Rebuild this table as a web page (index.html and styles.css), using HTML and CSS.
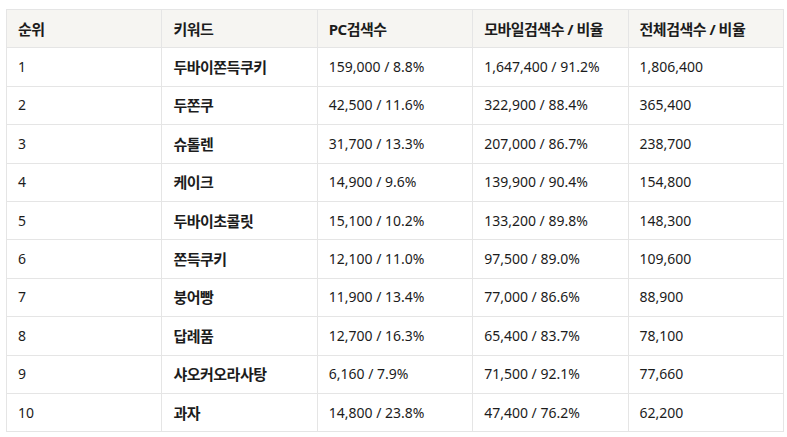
FILE: index.html
```html
<!DOCTYPE html>
<html lang="ko">
<head>
<meta charset="utf-8">
<link rel="stylesheet" href="styles.css">
</head>
<body>
<div class="wrap">
<table class="rank">
  <thead>
    <tr><th>순위</th><th>키워드</th><th>PC검색수</th><th>모바일검색수 / 비율</th><th>전체검색수 / 비율</th></tr>
  </thead>
  <tbody>
    <tr><td>1</td><td class="kw">두바이쫀득쿠키</td><td>159,000 / 8.8%</td><td>1,647,400 / 91.2%</td><td>1,806,400</td></tr>
    <tr><td>2</td><td class="kw">두쫀쿠</td><td>42,500 / 11.6%</td><td>322,900 / 88.4%</td><td>365,400</td></tr>
    <tr><td>3</td><td class="kw">슈톨렌</td><td>31,700 / 13.3%</td><td>207,000 / 86.7%</td><td>238,700</td></tr>
    <tr><td>4</td><td class="kw">케이크</td><td>14,900 / 9.6%</td><td>139,900 / 90.4%</td><td>154,800</td></tr>
    <tr><td>5</td><td class="kw">두바이초콜릿</td><td>15,100 / 10.2%</td><td>133,200 / 89.8%</td><td>148,300</td></tr>
    <tr><td>6</td><td class="kw">쫀득쿠키</td><td>12,100 / 11.0%</td><td>97,500 / 89.0%</td><td>109,600</td></tr>
    <tr><td>7</td><td class="kw">붕어빵</td><td>11,900 / 13.4%</td><td>77,000 / 86.6%</td><td>88,900</td></tr>
    <tr><td>8</td><td class="kw">답례품</td><td>12,700 / 16.3%</td><td>65,400 / 83.7%</td><td>78,100</td></tr>
    <tr><td>9</td><td class="kw">샤오커오라사탕</td><td>6,160 / 7.9%</td><td>71,500 / 92.1%</td><td>77,660</td></tr>
    <tr><td>10</td><td class="kw">과자</td><td>14,800 / 23.8%</td><td>47,400 / 76.2%</td><td>62,200</td></tr>
  </tbody>
</table>
</div>
</body>
</html>
```
FILE: styles.css
```css
html, body {
  margin: 0;
  padding: 0;
  background: #ffffff;
}
.wrap {
  padding: 9px 3px 0 6px;
}
.rank {
  width: 778px;
  table-layout: fixed;
  border-collapse: collapse;
  font-family: "Noto Sans", "Noto Sans CJK KR", sans-serif;
  font-size: 14px;
  color: #1c1c1c;
}
.rank th, .rank td {
  border: 1px solid #e5e5e5;
  padding: 0 11px;
  height: 37.4px;
  text-align: left;
  vertical-align: middle;
  line-height: 20px;
  white-space: nowrap;
}
.rank th {
  background: #f6f5f2;
  font-weight: 700;
  font-size: 15px;
  letter-spacing: -0.5px;
}
.rank td.kw {
  font-weight: 700;
  font-size: 15px;
  letter-spacing: -0.5px;
}
```
